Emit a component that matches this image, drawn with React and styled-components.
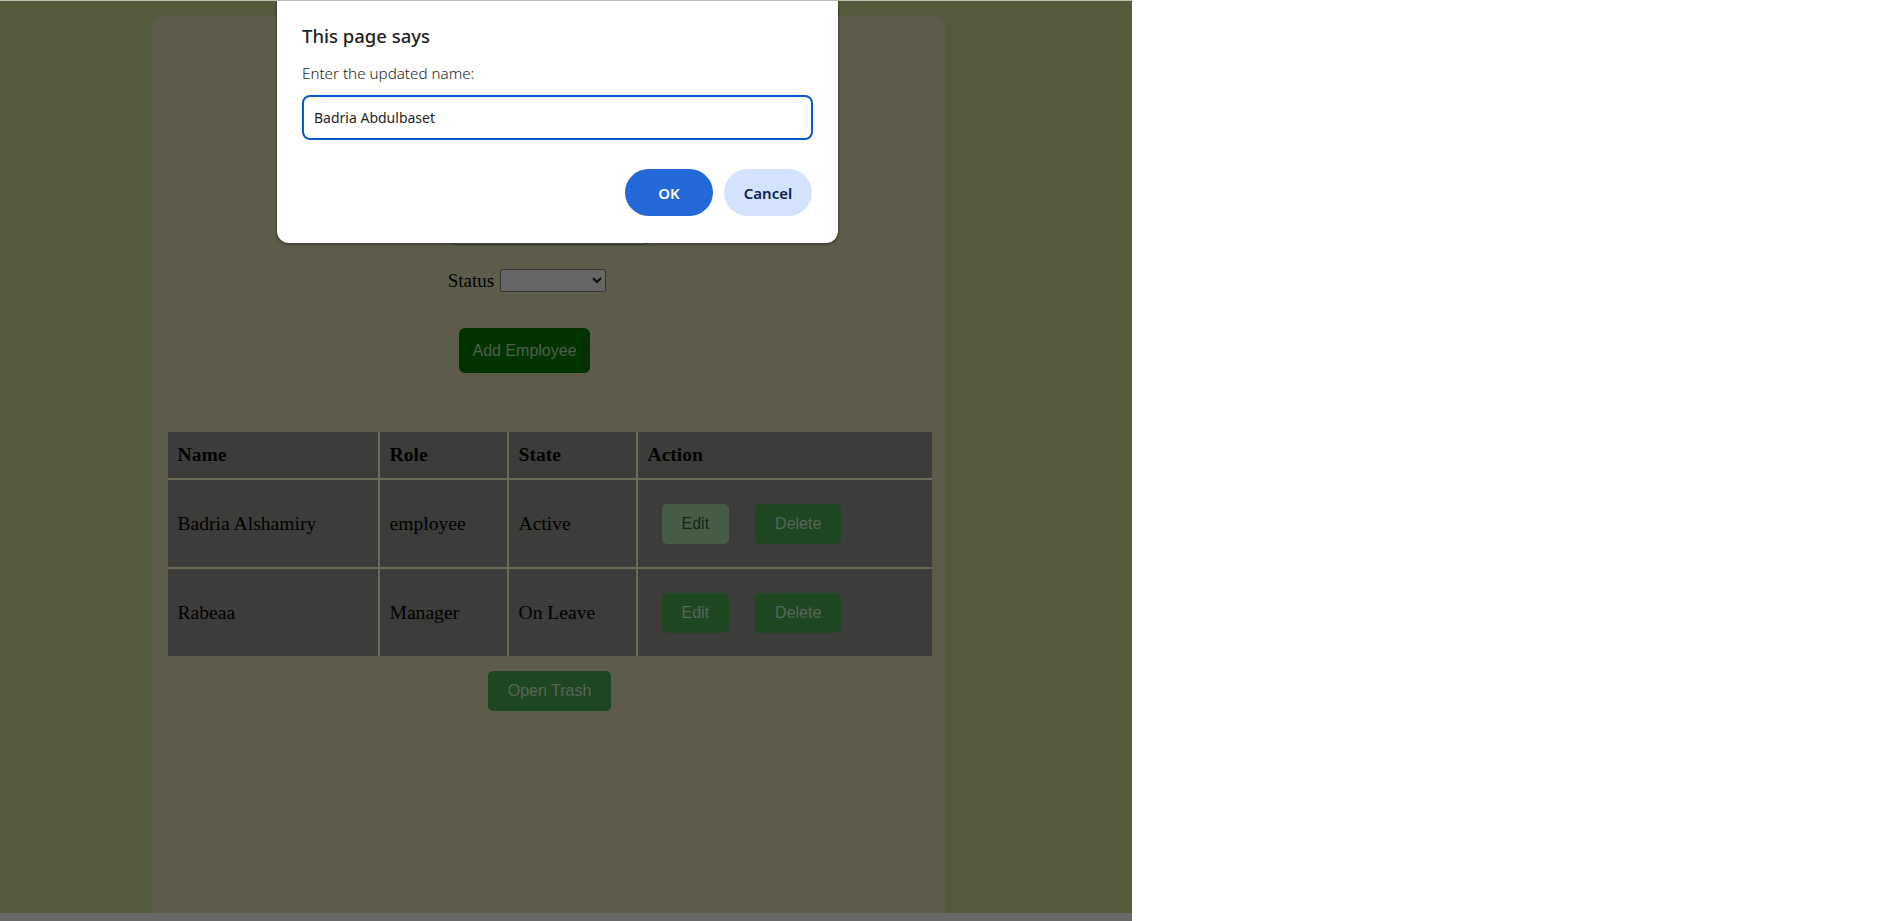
import React from 'react'
import styled, { createGlobalStyle } from 'styled-components'

const GlobalStyle = createGlobalStyle`
	html, body {
		margin: 0;
		padding: 0;
		background: #ffffff;
	}
	#root {
		height: 921px;
	}
`

const Viewport = styled.div`
	display: flex;
	flex-direction: row;
	height: 921px;
	overflow: hidden;
`

const Window = styled.div`
	display: flex;
	flex-direction: column;
	width: 1132px;
	flex: none;
`

const Screen = styled.div`
	position: relative;
	height: 912px;
	border-top: 1px solid #b9bbb0;
	background: #545a3c;
	overflow: hidden;
`

const Scrollbar = styled.div`
	height: 8px;
	background: #686868;
`

const Card = styled.div`
	margin: 15px 0 0 152px;
	width: 763px;
	height: 897px;
	padding: 68px 14px 0 16px;
	box-sizing: content-box;
	background: #5d5c4a;
	border-radius: 10px;
	display: flex;
	flex-direction: column;
	align-items: center;
`

const TextField = styled.input`
	display: block;
	margin-top: ${props => props.gap}px;
	width: 197px;
	height: 28px;
	box-sizing: border-box;
	border: 1px solid #3a3a36;
	border-radius: 4px;
	background: #666666;
	font-family: 'Liberation Serif', serif;
	font-size: 16px;
`

const StatusRow = styled.label`
	display: flex;
	flex-direction: row;
	align-items: center;
	gap: 6px;
	margin-top: 24px;
	margin-right: 45px;
	height: 23px;
	font-family: 'Liberation Serif', serif;
	font-size: 19px;
	color: #000;
`

const Select = styled.select`
	width: 106px;
	height: 23px;
	background: #666666;
	border: 1px solid #333333;
	border-radius: 2px;
	color: #111;
	font-size: 13px;
`

const AddButton = styled.button`
	margin-top: 36px;
	margin-right: 50px;
	width: 131px;
	height: 45px;
	border: none;
	border-radius: 6px;
	background: #003300;
	color: #4e604c;
	font-family: 'Liberation Sans', Arial, sans-serif;
	font-size: 16px;
	cursor: pointer;
`

const Table = styled.table`
	margin-top: 59px;
	width: 764px;
	border-collapse: separate;
	border-spacing: 0;
	font-family: 'Liberation Serif', serif;
	font-size: 19.6px;
	color: #000;
	table-layout: fixed;

	th, td {
		background: #3c3c3a;
		padding: 0 10px;
		text-align: left;
		vertical-align: middle;
	}
	th + th, td + td {
		border-left: 2px solid #6b6a55;
	}
	tbody td {
		border-top: 2px solid #6b6a55;
		height: 87px;
	}
	th {
		height: 46px;
		font-weight: bold;
	}
`

const ActionRow = styled.div`
	display: flex;
	flex-direction: row;
	align-items: center;
	gap: 26px;
	padding-left: 14px;
`

const GreenButton = styled.button`
	height: 40px;
	padding: 0 20px;
	border: none;
	border-radius: 5px;
	background: ${props => (props.hover ? '#465c45' : '#1e4621')};
	color: ${props => (props.hover ? '#142414' : '#58665a')};
	font-family: 'Liberation Sans', Arial, sans-serif;
	font-size: 16px;
	cursor: pointer;
`

const TrashButton = styled(GreenButton)`
	margin-top: 15px;
`

// the browser prompt sits over the page
const Prompt = styled.div`
	position: absolute;
	left: 277px;
	top: -13px;
	width: 561px;
	height: 255px;
	box-sizing: border-box;
	padding: 0 25px;
	background: #ffffff;
	border-radius: 12px;
	box-shadow: 0 1px 2px 1px rgba(0, 0, 0, 0.28);
	font-family: 'Noto Sans', 'Open Sans', sans-serif;
	color: #1f1f1f;
	display: flex;
	flex-direction: column;
`

const PromptTitle = styled.div`
	margin-top: 36px;
	font-size: 18.5px;
	font-weight: 500;
	line-height: 24px;
`

const PromptText = styled.div`
	margin-top: 15px;
	font-size: 15.2px;
	font-weight: 300;
	line-height: 20px;
`

const PromptInput = styled.input`
	margin-top: 12px;
	height: 41px;
	border: 2px solid #0b57d0;
	border-radius: 8px;
	padding: 0 10px;
	font-family: 'Noto Sans', 'Open Sans', sans-serif;
	font-size: 14px;
	color: #1f1f1f;
	outline: none;
`

const PromptButtons = styled.div`
	display: flex;
	flex-direction: row;
	justify-content: flex-end;
	gap: 11px;
	margin-top: 29px;
	padding-right: 1px;
`

const PillButton = styled.button`
	width: 88px;
	height: 47px;
	border: none;
	border-radius: 24px;
	background: ${props => (props.primary ? '#2569d8' : '#d3e3fd')};
	color: ${props => (props.primary ? '#ffffff' : '#0a1d45')};
	font-family: 'Noto Sans', 'Open Sans', sans-serif;
	font-size: 15px;
	font-weight: 600;
`

const employees = [
	{ name: 'Badria Alshamiry', role: 'employee', state: 'Active', hover: true },
	{ name: 'Rabeaa', role: 'Manager', state: 'On Leave' }
]

export default function App() {
	return (
		<Viewport>
			<GlobalStyle />
			<Window>
				<Screen>
					<Card>
						<TextField gap={46} />
						<TextField gap={59} />
						<StatusRow>
							Status
							<Select defaultValue="">
								<option value=""></option>
								<option>Active</option>
								<option>On Leave</option>
							</Select>
						</StatusRow>
						<AddButton>Add Employee</AddButton>

						<Table>
							<colgroup>
								<col style={{ width: 210 }} />
								<col style={{ width: 129 }} />
								<col style={{ width: 129 }} />
								<col style={{ width: 296 }} />
							</colgroup>
							<thead>
								<tr>
									<th>Name</th>
									<th>Role</th>
									<th>State</th>
									<th>Action</th>
								</tr>
							</thead>
							<tbody>
								{employees.map(e => (
									<tr key={e.name}>
										<td>{e.name}</td>
										<td>{e.role}</td>
										<td>{e.state}</td>
										<td>
											<ActionRow>
												<GreenButton hover={e.hover}>Edit</GreenButton>
												<GreenButton>Delete</GreenButton>
											</ActionRow>
										</td>
									</tr>
								))}
							</tbody>
						</Table>
						<TrashButton>Open Trash</TrashButton>
					</Card>

					<Prompt>
						<PromptTitle>This page says</PromptTitle>
						<PromptText>Enter the updated name:</PromptText>
						<PromptInput defaultValue="Badria Abdulbaset" />
						<PromptButtons>
							<PillButton primary>OK</PillButton>
							<PillButton>Cancel</PillButton>
						</PromptButtons>
					</Prompt>
				</Screen>
				<Scrollbar />
			</Window>
		</Viewport>
	)
}
